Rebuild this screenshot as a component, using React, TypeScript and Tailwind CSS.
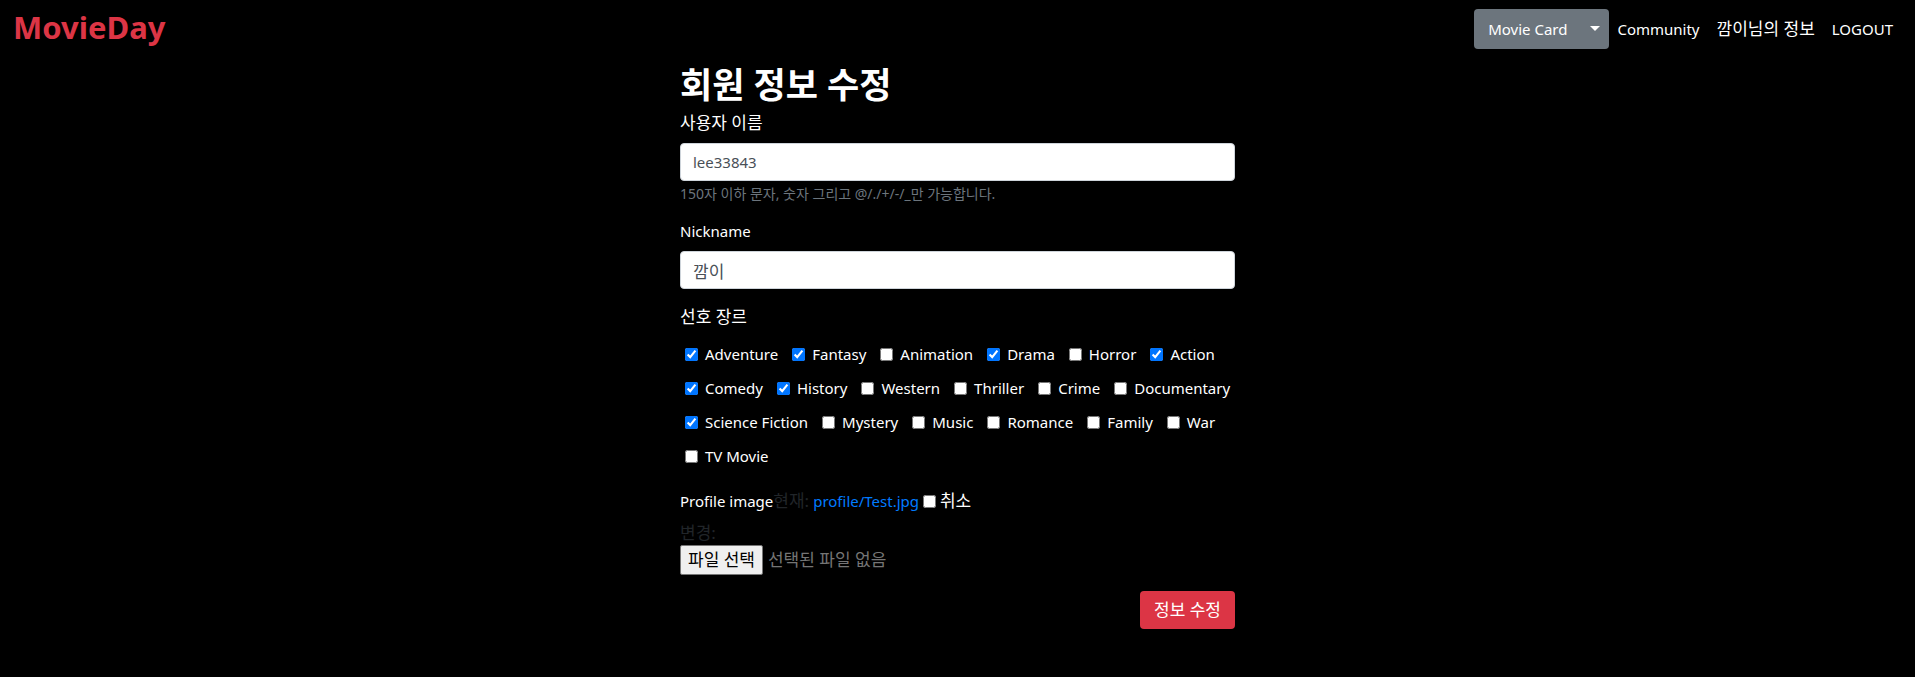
import React from "react";

type Genre = { name: string; checked?: boolean };

const genres: Genre[] = [
  { name: "Adventure", checked: true },
  { name: "Fantasy", checked: true },
  { name: "Animation" },
  { name: "Drama", checked: true },
  { name: "Horror" },
  { name: "Action", checked: true },
  { name: "Comedy", checked: true },
  { name: "History", checked: true },
  { name: "Western" },
  { name: "Thriller" },
  { name: "Crime" },
  { name: "Documentary" },
  { name: "Science Fiction", checked: true },
  { name: "Mystery" },
  { name: "Music" },
  { name: "Romance" },
  { name: "Family" },
  { name: "War" },
  { name: "TV Movie" },
];

const inputClass =
  "block h-[38px] w-full rounded border border-[#ced4da] bg-white px-3 text-[#495057] outline-none";

function Navbar() {
  return (
    <nav className="flex items-start justify-between pb-1.5 pl-[13px] pr-[22px] pt-[9px]">
      <a href="#" className="text-[31px] font-bold leading-9 text-[#dc3545]">
        MovieDay
      </a>
      <div className="flex items-center">
        <div className="mr-2 flex h-10 items-stretch overflow-hidden rounded bg-[#6c757d]">
          <button type="button" className="px-3.5">
            Movie Card
          </button>
          <button type="button" aria-label="Movie Card menu" className="flex w-7 items-center justify-center pb-0.5">
            <svg width="10" height="5" viewBox="0 0 10 5" aria-hidden="true">
              <path d="M0 0h10L5 5z" fill="#fff" />
            </svg>
          </button>
        </div>
        <div className="flex items-center gap-[17px]">
          <a href="#">Community</a>
          <a href="#" className="text-[17px]">깜이님의 정보</a>
          <a href="#">LOGOUT</a>
        </div>
      </div>
    </nav>
  );
}

export default function App() {
  return (
    <div className="min-h-screen bg-black font-['Noto_Sans','Noto_Sans_CJK_KR',sans-serif] text-[15px] leading-6 text-white">
      <Navbar />
      <form className="mx-auto w-full max-w-[555px]" onSubmit={(e) => e.preventDefault()}>
        <h1 className="pb-1 pt-2 text-[35px] font-bold leading-[44px]">회원 정보 수정</h1>

        <div className="mb-4">
          <label htmlFor="username" className="mb-2 block text-[17px]">사용자 이름</label>
          <input id="username" className={inputClass} defaultValue="lee33843" />
          <small className="mt-1 block text-[14px] leading-[18px] text-[#6c757d]">
            150자 이하 문자, 숫자 그리고 @/./+/-/_만 가능합니다.
          </small>
        </div>

        <div className="mb-4">
          <label htmlFor="nickname" className="mb-2 block">Nickname</label>
          <input id="nickname" className={`${inputClass} text-[17px]`} defaultValue="깜이" />
        </div>

        <fieldset className="mb-4">
          <legend className="mb-2 text-[17px]">선호 장르</legend>
          <div className="flex flex-wrap gap-x-[14px] pl-[5px]">
            {genres.map((g) => (
              <label key={g.name} className="flex h-[34px] items-center gap-[7px]">
                <input type="checkbox" defaultChecked={g.checked} className="size-[13px]" />
                {g.name}
              </label>
            ))}
          </div>
        </fieldset>

        <div className="mb-4">
          <div className="mb-2 flex items-center">
            <label htmlFor="profile">Profile image</label>
            <span className="mr-1 text-[17px] text-[#212529]">현재:</span>
            <a href="#" className="mr-1 text-[#007bff]">profile/Test.jpg</a>
            <label className="flex items-center gap-1 text-[17px]">
              <input type="checkbox" className="size-[13px]" />
              취소
            </label>
          </div>
          <div className="text-[17px] text-[#212529]">변경:</div>
          <label className="flex items-center gap-[5px] text-[17px] text-[#757575]">
            <input id="profile" type="file" className="sr-only" />
            <span className="flex h-[30px] items-center rounded-[2px] border border-[#767676] bg-[#efefef] px-[7px] text-black">
              파일 선택
            </span>
            선택된 파일 없음
          </label>
        </div>

        <div className="flex justify-end">
          <button type="submit" className="h-[38px] rounded bg-[#dc3545] px-3.5 text-[17px]">
            정보 수정
          </button>
        </div>
      </form>
    </div>
  );
}
